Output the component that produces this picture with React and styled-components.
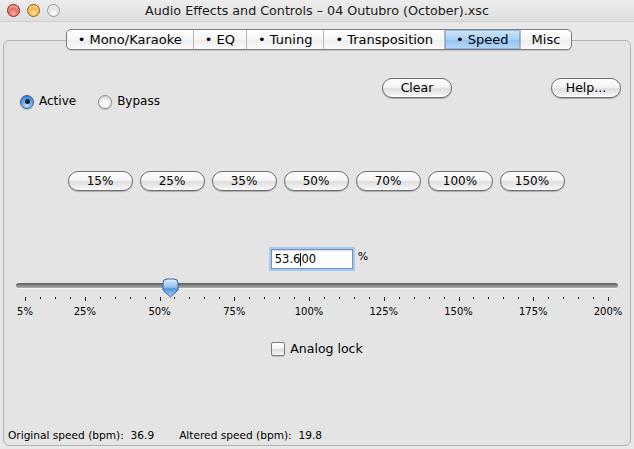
import React from 'react';
import styled, { createGlobalStyle } from 'styled-components';

const GlobalStyle = createGlobalStyle`
  html, body {
    margin: 0;
    padding: 0;
    background: #e8e8e8;
  }
  body {
    font-family: "DejaVu Sans", "Liberation Sans", sans-serif;
    color: #000;
  }
`;

const tabs = [
  { label: '• Mono/Karaoke' },
  { label: '• EQ' },
  { label: '• Tuning' },
  { label: '• Transposition' },
  { label: '• Speed', active: true },
  { label: 'Misc' },
];

const presets = ['15%', '25%', '35%', '50%', '70%', '100%', '150%'];

// scale: 5% .. 200%, one tick every 5%
const SCALE_MIN = 5;
const SCALE_MAX = 200;
const SCALE_LEFT = 9;
const SCALE_WIDTH = 583;
const scaleX = (v) => SCALE_LEFT + ((v - SCALE_MIN) / (SCALE_MAX - SCALE_MIN)) * SCALE_WIDTH;
const labels = [5, 25, 50, 75, 100, 125, 150, 175, 200];
const ticks = [];
for (let v = SCALE_MIN; v <= SCALE_MAX; v += 5) ticks.push(v);

const speed = 53.6;

const App = () => {
  return (
    <>
      <GlobalStyle />
      <Window>
        <TitleBar>
          <Lights>
            <Light $color="red" />
            <Light $color="orange" />
            <Light $color="gray" />
          </Lights>
          <Title>Audio Effects and Controls – 04 Outubro (October).xsc</Title>
        </TitleBar>

        <Body>
          <TabRow>
            <TabGroup>
              {tabs.map((t, i) => (
                <Tab key={i} $active={t.active}>{t.label}</Tab>
              ))}
            </TabGroup>
          </TabRow>

          <Panel>
            <TopRow>
              <Radios>
                <RadioItem>
                  <Radio $checked />
                  Active
                </RadioItem>
                <RadioItem>
                  <Radio />
                  Bypass
                </RadioItem>
              </Radios>
              <Spacer />
              <PillButton $width={70}>Clear</PillButton>
              <HelpButton $width={70}>Help...</HelpButton>
            </TopRow>

            <PresetRow>
              {presets.map((p) => (
                <PillButton key={p} $width={65} $small>{p}</PillButton>
              ))}
            </PresetRow>

            <FieldRow>
              <Field>
                53.6<Caret />00
              </Field>
              <Unit>%</Unit>
            </FieldRow>

            <Slider>
              <Track />
              <Thumb style={{ left: scaleX(speed) - 8.5 }}>
                <svg width="17" height="20" viewBox="0 0 17 20">
                  <defs>
                    <linearGradient id="thumbFill" x1="0" y1="0" x2="0" y2="1">
                      <stop offset="0" stopColor="#e3f1fd" />
                      <stop offset="0.45" stopColor="#8fc3f2" />
                      <stop offset="0.55" stopColor="#4f96e2" />
                      <stop offset="1" stopColor="#a9d4fa" />
                    </linearGradient>
                  </defs>
                  <path
                    d="M1 5 Q1 1 5 1 H12 Q16 1 16 5 V12 L8.5 19 L1 12 Z"
                    fill="url(#thumbFill)"
                    stroke="#35609a"
                    strokeWidth="1"
                  />
                </svg>
              </Thumb>
            </Slider>
            <Ticks width="602" height="5" viewBox="0 0 602 5">
              {ticks.map((v) => {
                const major = labels.includes(v);
                const x = Math.round(scaleX(v)) + 0.5;
                return (
                  <line key={v} x1={x} x2={x} y1="0" y2={major ? 4 : 2} stroke="#222" strokeWidth="1" />
                );
              })}
            </Ticks>
            <ScaleLabels>
              {labels.map((v) => (
                <ScaleLabel key={v} style={{ left: scaleX(v) }}>{v}%</ScaleLabel>
              ))}
            </ScaleLabels>

            <CheckRow>
              <Checkbox />
              Analog lock
            </CheckRow>

            <StatusRow>
              <Status>Original speed (bpm):&nbsp; 36.9</Status>
              <Status>Altered speed (bpm):&nbsp; 19.8</Status>
            </StatusRow>
          </Panel>
        </Body>
      </Window>
    </>
  );
};

// Styled-components

const Window = styled.div`
  width: 634px;
  height: 449px;
  display: flex;
  flex-direction: column;
  background: #e8e8e8;
  overflow: hidden;
`;

const TitleBar = styled.div`
  height: 22px;
  flex: none;
  display: flex;
  align-items: center;
  position: relative;
  background: linear-gradient(#ededed, #dedede);
  border-bottom: 1px solid #cfcfcf;
  box-sizing: border-box;
`;

const Lights = styled.div`
  display: flex;
  gap: 7px;
  padding-left: 7px;
`;

const lightColors = {
  red: ['#ffb2aa', '#e0443b', '#8f1f1a'],
  orange: ['#ffe6a3', '#f0a21e', '#9a5a0c'],
  gray: ['#ffffff', '#d6d6d6', '#9a9a9a'],
};

const Light = styled.span`
  width: 13px;
  height: 13px;
  border-radius: 50%;
  box-sizing: border-box;
  border: 1px solid ${(p) => lightColors[p.$color][2]};
  background: radial-gradient(circle at 50% 75%, ${(p) => lightColors[p.$color][0]} 0%, ${(p) => lightColors[p.$color][1]} 70%);
  box-shadow: inset 0 2px 2px rgba(255, 255, 255, 0.6);
`;

const Title = styled.div`
  flex: 1;
  text-align: center;
  font-size: 12.7px;
  line-height: 16px;
  padding-top: 1px;
  color: #1a1a1a;
  margin-right: 60px;
`;

const Body = styled.div`
  flex: 1;
  display: flex;
  flex-direction: column;
  padding: 7px 3px 3px;
  min-height: 0;
`;

const TabRow = styled.div`
  display: flex;
  justify-content: center;
  margin-bottom: -10px;
  position: relative;
  z-index: 1;
  padding-left: 4px;
`;

const TabGroup = styled.div`
  display: flex;
  height: 21px;
  box-sizing: border-box;
  border: 1px solid #7e7e7e;
  border-radius: 5px;
  overflow: hidden;
  background: linear-gradient(#ffffff, #f6f6f6 50%, #ececec 51%, #fbfbfb);
  box-shadow: 0 1px 1px rgba(0, 0, 0, 0.15);
`;

const Tab = styled.div`
  padding: 0 11px;
  font-size: 13px;
  line-height: 19px;
  white-space: nowrap;
  & + & {
    border-left: 1px solid #b8b8b8;
  }
  ${(p) => p.$active && `
    background: linear-gradient(#cfe5fa, #a9d0f6 50%, #92c2f2 51%, #b6d9fa);
    box-shadow: inset 0 0 0 1px rgba(60, 100, 160, 0.35);
  `}
`;

const Panel = styled.div`
  flex: 1;
  display: flex;
  flex-direction: column;
  border: 1px solid #b3b3b3;
  border-radius: 6px;
  background: #e4e4e4;
  min-height: 0;
`;

const TopRow = styled.div`
  display: flex;
  align-items: flex-start;
  padding: 37px 9px 0 16px;
`;

const Radios = styled.div`
  display: flex;
  gap: 22px;
  margin-top: 16px;
`;

const RadioItem = styled.label`
  display: flex;
  align-items: center;
  gap: 5px;
  font-size: 12px;
  line-height: 15px;
`;

const Radio = styled.span`
  width: 14px;
  height: 14px;
  box-sizing: border-box;
  border-radius: 50%;
  position: relative;
  border: 1px solid ${(p) => (p.$checked ? '#3a5f95' : '#8d8d8d')};
  background: ${(p) =>
    p.$checked
      ? 'radial-gradient(circle at 50% 80%, #bfe0fb 0%, #5b9ee6 55%, #2f6fc4 100%)'
      : 'radial-gradient(circle at 50% 80%, #ffffff 0%, #f2f2f2 50%, #c9c9c9 100%)'};
  box-shadow: 0 1px 1px rgba(0, 0, 0, 0.2);
  &::after {
    content: '';
    display: ${(p) => (p.$checked ? 'block' : 'none')};
    position: absolute;
    left: 3.5px;
    top: 3.5px;
    width: 5px;
    height: 5px;
    border-radius: 50%;
    background: #13243a;
  }
`;

const Spacer = styled.div`
  flex: 1;
`;

const PillButton = styled.div`
  width: ${(p) => p.$width}px;
  height: 20px;
  box-sizing: border-box;
  flex: none;
  border: 1px solid #6f6f6f;
  border-radius: 10px;
  background: linear-gradient(#ffffff, #f4f4f4 45%, #dedede 55%, #f3f3f3 90%, #ffffff);
  box-shadow: 0 1px 1px rgba(0, 0, 0, 0.25);
  display: flex;
  align-items: center;
  justify-content: center;
  font-size: ${(p) => (p.$small ? '12px' : '12.5px')};
  line-height: 18px;
`;

const HelpButton = styled(PillButton)`
  margin-left: 99px;
`;

const PresetRow = styled.div`
  display: flex;
  justify-content: center;
  gap: 7px;
  margin-top: 62px;
  padding-right: 2px;
`;

const FieldRow = styled.div`
  display: flex;
  justify-content: center;
  align-items: flex-start;
  gap: 5px;
  margin-top: 58px;
  padding-left: 5px;
`;

const Field = styled.div`
  width: 82px;
  height: 20px;
  box-sizing: border-box;
  background: #fff;
  border: 1px solid #6c94c6;
  box-shadow: 0 0 0 2px #a6c8ee, inset 0 1px 1px rgba(0, 0, 0, 0.15);
  font-size: 11.5px;
  line-height: 18px;
  padding-left: 3px;
  display: flex;
  align-items: center;
`;

const Caret = styled.span`
  width: 1px;
  height: 13px;
  background: #000;
`;

const Unit = styled.span`
  font-size: 11px;
  line-height: 14px;
  margin-top: 1px;
`;

const Slider = styled.div`
  position: relative;
  height: 19px;
  margin: 9px 12px 0;
`;

const Track = styled.div`
  margin-top: 5px;
  height: 5px;
  border-radius: 3px;
  background: linear-gradient(#5e5e5e, #8c8c8c 60%, #b0b0b0);
  box-shadow: 0 1px 0 rgba(255, 255, 255, 0.6);
`;

const Thumb = styled.div`
  position: absolute;
  top: 0;
  width: 17px;
  height: 20px;
  line-height: 0;
`;

const Ticks = styled.svg`
  display: block;
  margin: 0 12px;
`;

const ScaleLabels = styled.div`
  position: relative;
  height: 14px;
  margin: 3px 12px 0;
`;

const ScaleLabel = styled.span`
  position: absolute;
  top: 0;
  transform: translateX(-50%);
  font-size: 10px;
  line-height: 14px;
  white-space: nowrap;
`;

const CheckRow = styled.label`
  display: flex;
  align-items: center;
  justify-content: center;
  gap: 5px;
  margin-top: 22px;
  font-size: 12.5px;
  line-height: 15px;
`;

const Checkbox = styled.span`
  width: 14px;
  height: 14px;
  box-sizing: border-box;
  border: 1px solid #7e7e7e;
  border-radius: 2px;
  background: linear-gradient(#ffffff, #f0f0f0 50%, #dcdcdc 55%, #f6f6f6);
  box-shadow: 0 1px 1px rgba(0, 0, 0, 0.15);
`;

const StatusRow = styled.div`
  margin-top: auto;
  display: flex;
  gap: 25px;
  padding: 0 0 3px 4px;
`;

const Status = styled.span`
  font-size: 10.6px;
  line-height: 13px;
`;

export default App;
